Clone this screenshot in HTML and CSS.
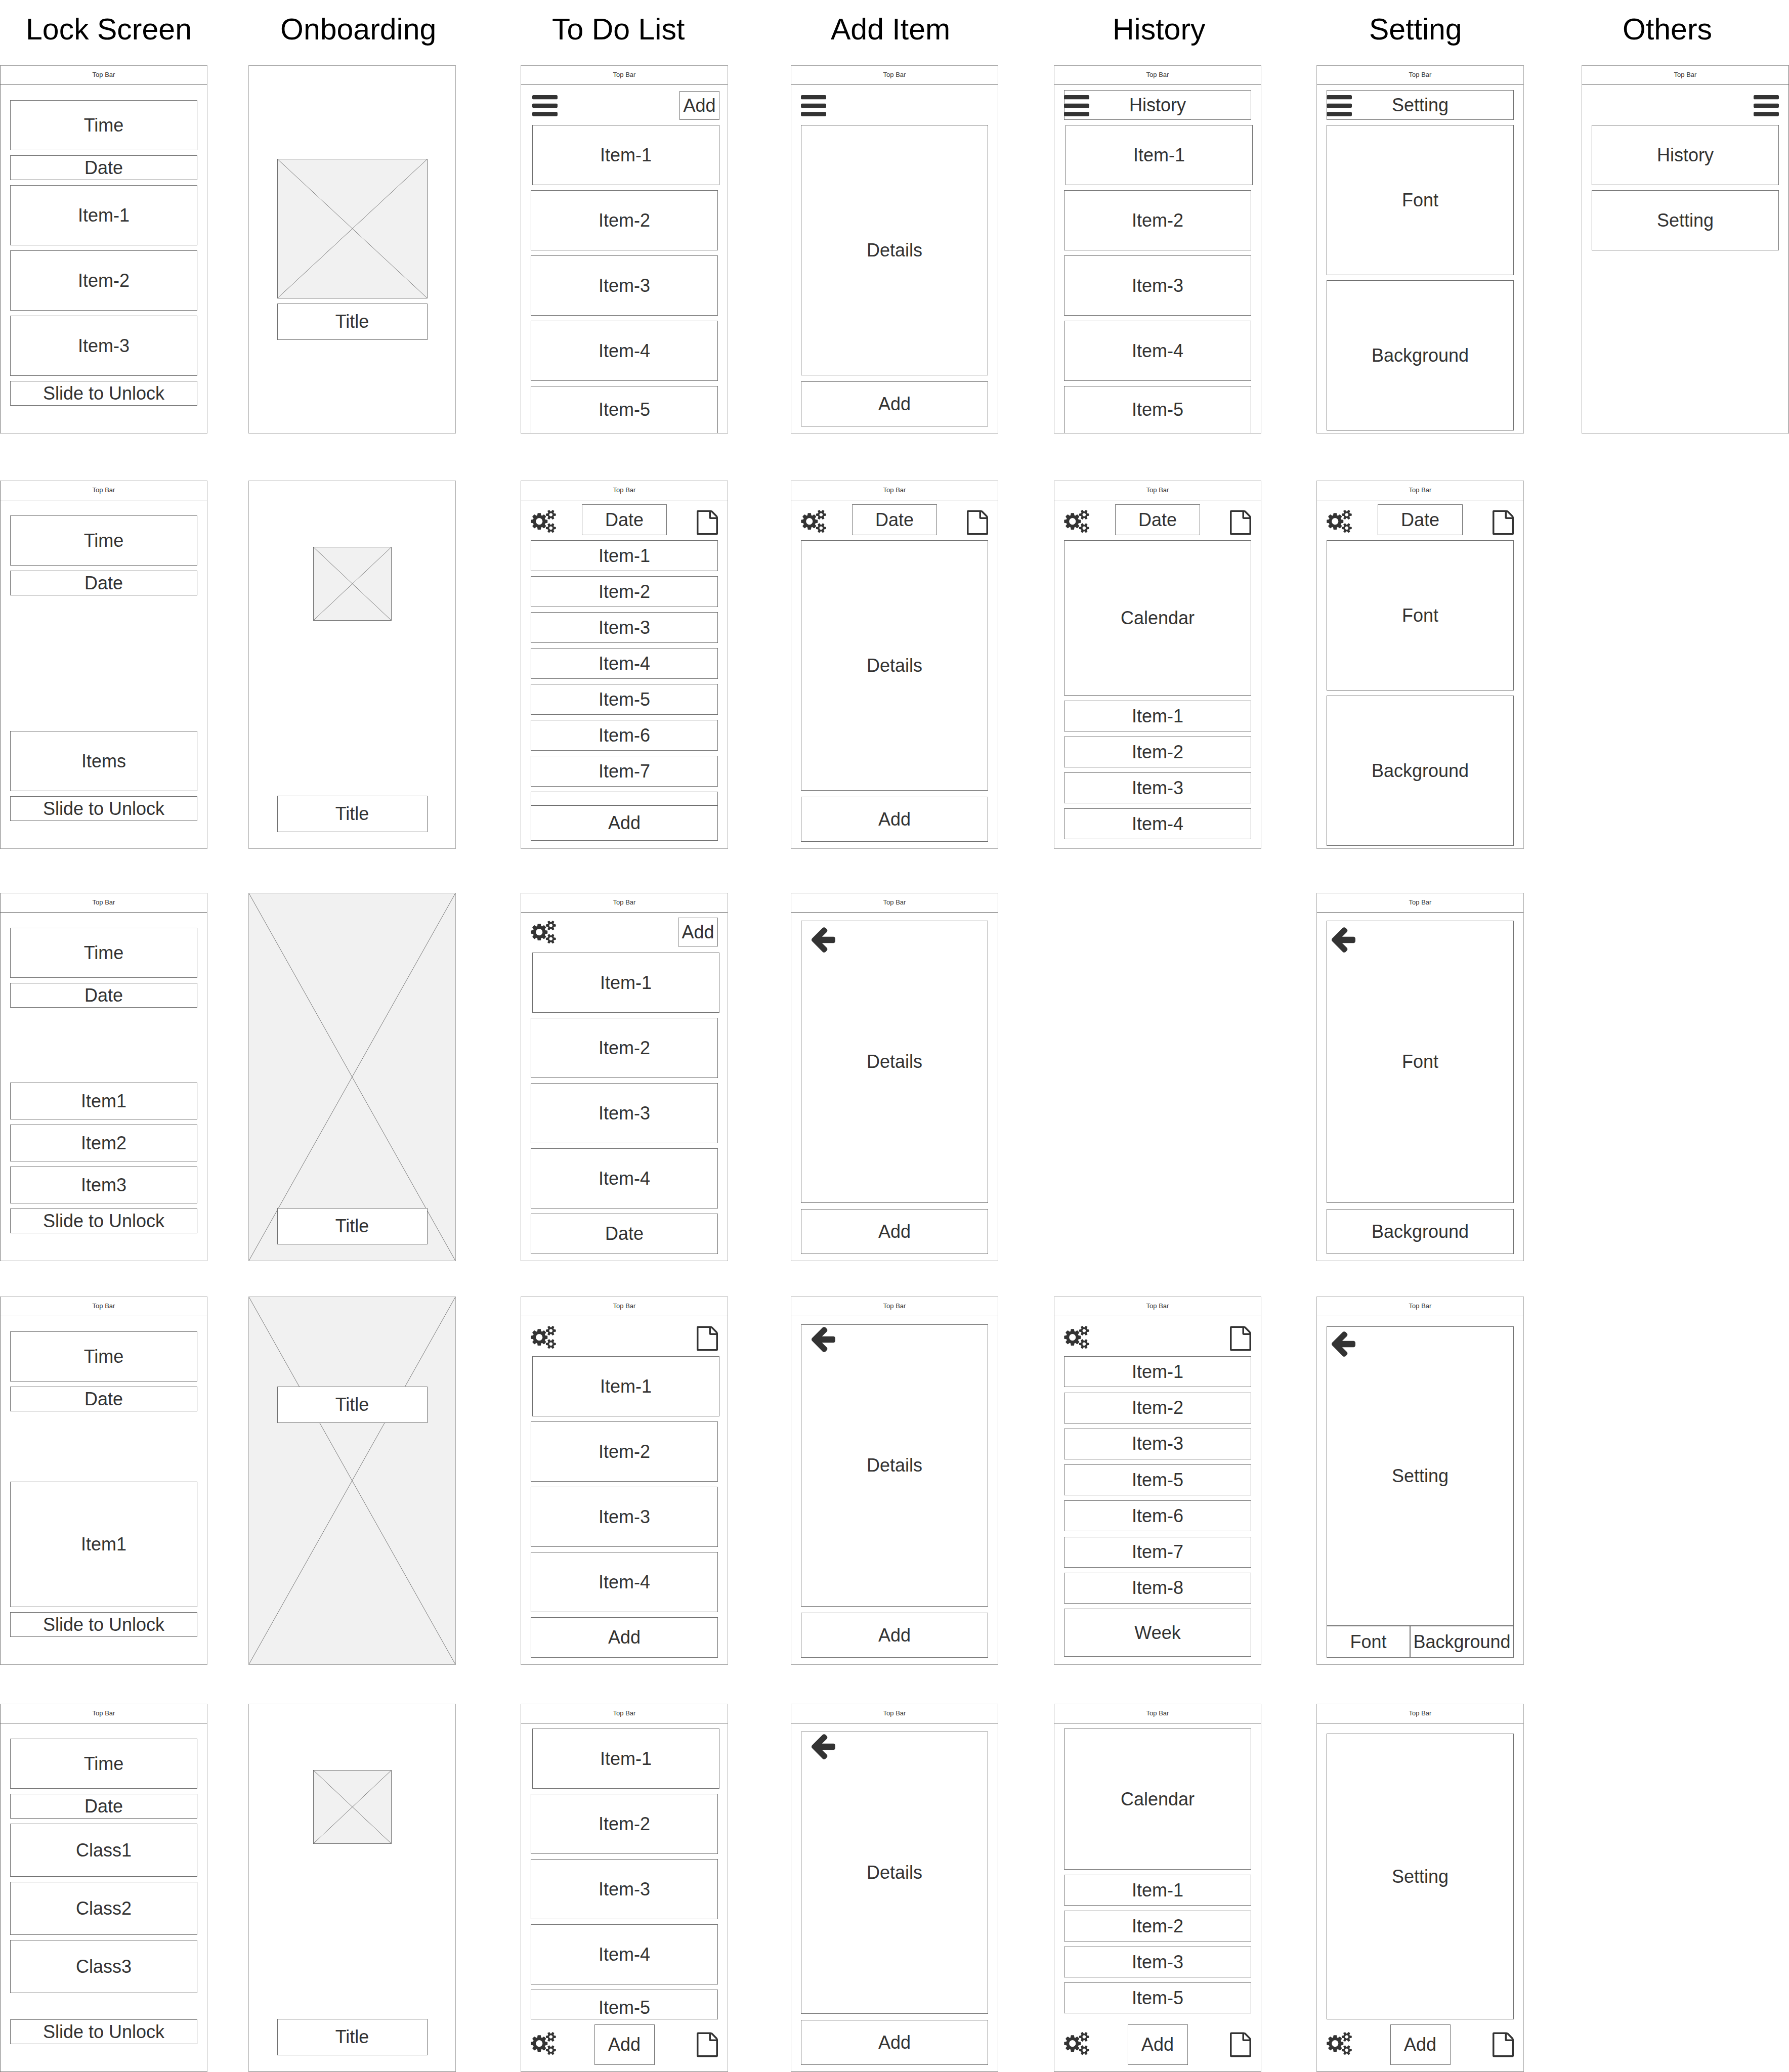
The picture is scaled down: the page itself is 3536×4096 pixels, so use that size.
FILE: index.html
```html
<!DOCTYPE html>
<html lang="en">
<head>
<meta charset="utf-8">
<meta name="viewport" content="width=device-width, initial-scale=1">
<title>To-do app wireframes</title>
<link rel="stylesheet" href="styles.css">
</head>
<body>
<svg class="sprite" aria-hidden="true">
  <symbol id="bars" viewBox="128 225 1536 1536"><path d="M1664 1344v128q0 26-19 45t-45 19h-1408q-26 0-45-19t-19-45v-128q0-26 19-45t45-19h1408q26 0 45 19t19 45zm0-512v128q0 26-19 45t-45 19h-1408q-26 0-45-19t-19-45v-128q0-26 19-45t45-19h1408q26 0 45 19t19 45zm0-512v128q0 26-19 45t-45 19h-1408q-26 0-45-19t-19-45v-128q0-26 19-45t45-19h1408q26 0 45 19t19 45z"/></symbol>
  <symbol id="page" viewBox="128 0 1536 1792"><path d="M1596 380q28 28 48 76t20 88v1152q0 40-28 68t-68 28h-1344q-40 0-68-28t-28-68v-1600q0-40 28-68t68-28h896q40 0 88 20t76 48zm-444-244v376h376q-10-29-22-41l-313-313q-12-12-41-22zm384 1528v-1024h-416q-40 0-68-28t-28-68v-416h-768v1536h1280z"/></symbol>
  <symbol id="back" viewBox="192 180 1472 1560"><path d="M1664 896v128q0 53-32.5 90.5t-84.5 37.5h-704l293 294q38 36 38 90t-38 90l-75 76q-37 37-90 37-52 0-91-37l-651-652q-37-37-37-90 0-52 37-91l651-650q38-38 91-38 52 0 90 38l75 74q38 38 38 91t-38 91l-293 293h704q52 0 84.5 37.5t32.5 90.5z"/></symbol>
  <symbol id="gears" viewBox="0 16 1920 1943"><path d="M896 896q0-106-75-181t-181-75-181 75-75 181 75 181 181 75 181-75 75-181zm768 512q0-52-38-90t-90-38-90 38-38 90q0 53 37.5 90.5t90.5 37.5 90.5-37.5 37.5-90.5zm0-1024q0-52-38-90t-90-38-90 38-38 90q0 53 37.5 90.5t90.5 37.5 90.5-37.5 37.5-90.5zm-384 421v185q0 10-7 19.5t-16 10.5l-155 24q-11 35-32 76 34 48 90 115 7 11 7 20 0 12-7 19-23 30-82.5 89.5t-78.5 59.5q-11 0-21-7l-115-90q-37 19-77 31-11 108-23 155-7 24-30 24h-186q-11 0-20-7.5t-10-17.5l-23-153q-34-10-75-31l-118 89q-7 7-20 7-11 0-21-8-144-133-144-160 0-9 7-19 10-14 41-53t47-61q-23-44-35-82l-152-24q-10-1-17-9.5t-7-19.5v-185q0-10 7-19.5t16-10.5l155-24q11-35 32-76-34-48-90-115-7-11-7-20 0-12 7-20 22-30 82-89t79-59q11 0 21 7l115 90q34-18 77-32 11-108 23-154 7-24 30-24h186q11 0 20 7.5t10 17.5l23 153q34 10 75 31l118-89q8-7 20-7 11 0 21 8 144 133 144 160 0 8-7 19-12 16-42 54t-45 60q23 48 34 82l152 23q10 2 17 10.5t7 19.5zm640 533v140q0 16-149 31-12 27-30 52 51 113 51 138 0 4-4 7-122 71-124 71-8 0-46-47t-52-68q-20 2-30 2t-30-2q-14 21-52 68t-46 47q-2 0-124-71-4-3-4-7 0-25 51-138-18-25-30-52-149-15-149-31v-140q0-16 149-31 13-29 30-52-51-113-51-138 0-4 4-7 4-2 35-20t59-34 30-16q8 0 46 46.5t52 67.5q20-2 30-2t30 2q51-71 92-112l6-2q4 0 124 70 4 3 4 7 0 25-51 138 17 23 30 52 149 15 149 31zm0-1024v140q0 16-149 31-12 27-30 52 51 113 51 138 0 4-4 7-122 71-124 71-8 0-46-47t-52-68q-20 2-30 2t-30-2q-14 21-52 68t-46 47q-2 0-124-71-4-3-4-7 0-25 51-138-18-25-30-52-149-15-149-31v-140q0-16 149-31 13-29 30-52-51-113-51-138 0-4 4-7 4-2 35-20t59-34 30-16q8 0 46 46.5t52 67.5q20-2 30-2t30 2q51-71 92-112l6-2q4 0 124 70 4 3 4 7 0 25-51 138 17 23 30 52 149 15 149 31z"/></symbol>
</svg>

<header class="headings">
  <h2>Lock Screen</h2>
  <h2>Onboarding</h2>
  <h2>To Do List</h2>
  <h2>Add Item</h2>
  <h2>History</h2>
  <h2>Setting</h2>
  <h2>Others</h2>
</header>

<main class="board">
  <!-- Option 1 -->
  <section class="row">
    <article class="screen col-lock">
      <div class="topbar">Top Bar</div>
      <div class="body body-lock">
        <div class="box h-99">Time</div>
        <div class="box h-49">Date</div>
        <div class="box h-119">Item-1</div>
        <div class="box h-119">Item-2</div>
        <div class="box h-119">Item-3</div>
        <button class="box h-49">Slide to Unlock</button>
      </div>
    </article>
    <article class="screen col-onboarding">
      <div class="splash splash-middle">
        <svg class="placeholder placeholder-large" viewBox="0 0 100 100" preserveAspectRatio="none"><path d="M0 0L100 100M100 0L0 100"/></svg>
        <div class="box title">Title</div>
      </div>
    </article>
    <article class="screen col-todo">
      <div class="topbar">Top Bar</div>
      <div class="body pad-12 flush">
        <div class="tools lead">
          <button class="icon" aria-label="Menu"><svg class="i-bars"><use href="#bars"/></svg></button>
          <button class="box small-add">Add</button>
        </div>
        <div class="box h-119 lead">Item-1</div>
        <div class="box h-119">Item-2</div>
        <div class="box h-119">Item-3</div>
        <div class="box h-119">Item-4</div>
        <div class="box cut">Item-5</div>
      </div>
    </article>
    <article class="screen col-add">
      <div class="topbar">Top Bar</div>
      <div class="body pad-12">
        <div class="tools h-57">
          <button class="icon" aria-label="Menu"><svg class="i-bars"><use href="#bars"/></svg></button>
        </div>
        <div class="form">
          <div class="box grow">Details</div>
          <button class="box h-89">Add</button>
        </div>
      </div>
    </article>
    <article class="screen col-history">
      <div class="topbar">Top Bar</div>
      <div class="body pad-10 flush">
        <div class="titlebar">
          <div class="box h-59">History</div>
          <button class="icon" aria-label="Menu"><svg class="i-bars"><use href="#bars"/></svg></button>
        </div>
        <div class="box h-119 lead">Item-1</div>
        <div class="box h-119">Item-2</div>
        <div class="box h-119">Item-3</div>
        <div class="box h-119">Item-4</div>
        <div class="box cut">Item-5</div>
      </div>
    </article>
    <article class="screen col-setting">
      <div class="topbar">Top Bar</div>
      <div class="body pad-10 flush">
        <div class="titlebar">
          <div class="box h-59">Setting</div>
          <button class="icon" aria-label="Menu"><svg class="i-bars"><use href="#bars"/></svg></button>
        </div>
        <div class="box h-297">Font</div>
        <div class="box h-297">Background</div>
      </div>
    </article>
    <article class="screen col-others">
      <div class="topbar">Top Bar</div>
      <div class="body pad-12">
        <div class="tools tools-right h-57">
          <button class="icon" aria-label="Menu"><svg class="i-bars"><use href="#bars"/></svg></button>
        </div>
        <a class="box h-119" href="#history">History</a>
        <a class="box h-119" href="#setting">Setting</a>
      </div>
    </article>
  </section>

  <!-- Option 2 -->
  <section class="row row-2">
    <article class="screen col-lock">
      <div class="topbar">Top Bar</div>
      <div class="body body-lock">
        <div class="box h-99">Time</div>
        <div class="box h-49">Date</div>
        <div class="box h-119 push">Items</div>
        <button class="box h-49">Slide to Unlock</button>
      </div>
    </article>
    <article class="screen col-onboarding">
      <div class="splash splash-apart">
        <svg class="placeholder placeholder-small" viewBox="0 0 100 100" preserveAspectRatio="none"><path d="M0 0L100 100M100 0L0 100"/></svg>
        <div class="box title">Title</div>
      </div>
    </article>
    <article class="screen col-todo">
      <div class="topbar">Top Bar</div>
      <div class="body pad-8 end-15">
        <div class="tools tools-three">
          <button class="icon" aria-label="Settings"><svg class="i-gears"><use href="#gears"/></svg></button>
          <div class="box date">Date</div>
          <button class="icon" aria-label="History"><svg class="i-page"><use href="#page"/></svg></button>
        </div>
        <div class="box h-61">Item-1</div>
        <div class="box h-61">Item-2</div>
        <div class="box h-61">Item-3</div>
        <div class="box h-61">Item-4</div>
        <div class="box h-61">Item-5</div>
        <div class="box h-61">Item-6</div>
        <div class="box h-61">Item-7</div>
        <div class="joined">
          <div class="box grow"></div>
          <button class="box h-70">Add</button>
        </div>
      </div>
    </article>
    <article class="screen col-add">
      <div class="topbar">Top Bar</div>
      <div class="body pad-8">
        <div class="tools tools-three">
          <button class="icon" aria-label="Settings"><svg class="i-gears"><use href="#gears"/></svg></button>
          <div class="box date">Date</div>
          <button class="icon" aria-label="History"><svg class="i-page"><use href="#page"/></svg></button>
        </div>
        <div class="form">
          <div class="box grow">Details</div>
          <button class="box h-89">Add</button>
        </div>
      </div>
    </article>
    <article class="screen col-history">
      <div class="topbar">Top Bar</div>
      <div class="body pad-8">
        <div class="tools tools-three">
          <button class="icon" aria-label="Settings"><svg class="i-gears"><use href="#gears"/></svg></button>
          <div class="box date">Date</div>
          <button class="icon" aria-label="History"><svg class="i-page"><use href="#page"/></svg></button>
        </div>
        <div class="box h-307">Calendar</div>
        <div class="box h-61">Item-1</div>
        <div class="box h-61">Item-2</div>
        <div class="box h-61">Item-3</div>
        <div class="box h-61">Item-4</div>
      </div>
    </article>
    <article class="screen col-setting">
      <div class="topbar">Top Bar</div>
      <div class="body pad-8 flush">
        <div class="tools tools-three">
          <button class="icon" aria-label="Settings"><svg class="i-gears"><use href="#gears"/></svg></button>
          <div class="box date">Date</div>
          <button class="icon" aria-label="History"><svg class="i-page"><use href="#page"/></svg></button>
        </div>
        <div class="box h-297">Font</div>
        <div class="box h-297">Background</div>
      </div>
    </article>
  </section>

  <!-- Option 3 -->
  <section class="row row-3">
    <article class="screen col-lock">
      <div class="topbar">Top Bar</div>
      <div class="body body-lock">
        <div class="box h-99">Time</div>
        <div class="box h-49">Date</div>
        <div class="box h-73 push">Item1</div>
        <div class="box h-73">Item2</div>
        <div class="box h-73">Item3</div>
        <button class="box h-49">Slide to Unlock</button>
      </div>
    </article>
    <article class="screen screen-filled col-onboarding">
      <svg class="backdrop" viewBox="0 0 100 100" preserveAspectRatio="none"><path d="M0 0L100 100M100 0L0 100"/></svg>
      <div class="splash splash-bottom">
        <div class="box title">Title</div>
      </div>
    </article>
    <article class="screen col-todo">
      <div class="topbar">Top Bar</div>
      <div class="body pad-10">
        <div class="tools h-59">
          <button class="icon" aria-label="Settings"><svg class="i-gears"><use href="#gears"/></svg></button>
          <button class="box small-add">Add</button>
        </div>
        <div class="box h-119 lead">Item-1</div>
        <div class="box h-119">Item-2</div>
        <div class="box h-119">Item-3</div>
        <div class="box h-119">Item-4</div>
        <div class="box h-80">Date</div>
      </div>
    </article>
    <article class="screen col-add">
      <div class="topbar">Top Bar</div>
      <div class="body pad-16">
        <div class="form">
          <div class="box grow with-back">Details
            <button class="icon back" aria-label="Back"><svg class="i-back"><use href="#back"/></svg></button>
          </div>
          <button class="box h-89">Add</button>
        </div>
      </div>
    </article>
    <article class="screen col-setting">
      <div class="topbar">Top Bar</div>
      <div class="body pad-16">
        <div class="form">
          <div class="box grow with-back">Font
            <button class="icon back back-near" aria-label="Back"><svg class="i-back"><use href="#back"/></svg></button>
          </div>
          <button class="box h-89">Background</button>
        </div>
      </div>
    </article>
  </section>

  <!-- Option 4 -->
  <section class="row row-4">
    <article class="screen col-lock">
      <div class="topbar">Top Bar</div>
      <div class="body body-lock">
        <div class="box h-99">Time</div>
        <div class="box h-49">Date</div>
        <div class="box h-248 push">Item1</div>
        <button class="box h-49">Slide to Unlock</button>
      </div>
    </article>
    <article class="screen screen-filled col-onboarding">
      <svg class="backdrop" viewBox="0 0 100 100" preserveAspectRatio="none"><path d="M0 0L100 100M100 0L0 100"/></svg>
      <div class="splash splash-top">
        <div class="box title">Title</div>
      </div>
    </article>
    <article class="screen col-todo">
      <div class="topbar">Top Bar</div>
      <div class="body pad-8">
        <div class="tools h-61">
          <button class="icon" aria-label="Settings"><svg class="i-gears"><use href="#gears"/></svg></button>
          <button class="icon" aria-label="History"><svg class="i-page"><use href="#page"/></svg></button>
        </div>
        <div class="box h-119 lead">Item-1</div>
        <div class="box h-119">Item-2</div>
        <div class="box h-119">Item-3</div>
        <div class="box h-119">Item-4</div>
        <button class="box h-80">Add</button>
      </div>
    </article>
    <article class="screen col-add">
      <div class="topbar">Top Bar</div>
      <div class="body pad-16">
        <div class="form">
          <div class="box grow with-back">Details
            <button class="icon back back-high" aria-label="Back"><svg class="i-back"><use href="#back"/></svg></button>
          </div>
          <button class="box h-89">Add</button>
        </div>
      </div>
    </article>
    <article class="screen col-history">
      <div class="topbar">Top Bar</div>
      <div class="body pad-8 end-15 spread">
        <div class="tools h-61">
          <button class="icon" aria-label="Settings"><svg class="i-gears"><use href="#gears"/></svg></button>
          <button class="icon" aria-label="History"><svg class="i-page"><use href="#page"/></svg></button>
        </div>
        <div class="box h-61">Item-1</div>
        <div class="box h-61">Item-2</div>
        <div class="box h-61">Item-3</div>
        <div class="box h-61">Item-5</div>
        <div class="box h-61">Item-6</div>
        <div class="box h-61">Item-7</div>
        <div class="box h-61">Item-8</div>
        <div class="box h-95">Week</div>
      </div>
    </article>
    <article class="screen col-setting">
      <div class="topbar">Top Bar</div>
      <div class="body pad-20">
        <div class="joined">
          <div class="box grow with-back">Setting
            <button class="icon back back-corner" aria-label="Back"><svg class="i-back"><use href="#back"/></svg></button>
          </div>
          <div class="tabs">
            <button class="box h-63">Font</button>
            <button class="box h-63">Background</button>
          </div>
        </div>
      </div>
    </article>
  </section>

  <!-- Option 5 -->
  <section class="row row-5">
    <article class="screen col-lock">
      <div class="topbar">Top Bar</div>
      <div class="body body-lock">
        <div class="box h-99">Time</div>
        <div class="box h-49">Date</div>
        <div class="box h-105">Class1</div>
        <div class="box h-105">Class2</div>
        <div class="box h-105">Class3</div>
        <button class="box h-49 push">Slide to Unlock</button>
      </div>
    </article>
    <article class="screen col-onboarding">
      <div class="splash splash-apart">
        <svg class="placeholder placeholder-small" viewBox="0 0 100 100" preserveAspectRatio="none"><path d="M0 0L100 100M100 0L0 100"/></svg>
        <div class="box title">Title</div>
      </div>
    </article>
    <article class="screen col-todo">
      <div class="topbar">Top Bar</div>
      <div class="body pad-10">
        <div class="box h-119 lead">Item-1</div>
        <div class="box h-119">Item-2</div>
        <div class="box h-119">Item-3</div>
        <div class="box h-119">Item-4</div>
        <div class="box h-59 overlapped">Item-5</div>
        <div class="tools tools-three tools-bottom">
          <button class="icon" aria-label="Settings"><svg class="i-gears"><use href="#gears"/></svg></button>
          <button class="box wide-add">Add</button>
          <button class="icon" aria-label="History"><svg class="i-page"><use href="#page"/></svg></button>
        </div>
      </div>
    </article>
    <article class="screen col-add">
      <div class="topbar">Top Bar</div>
      <div class="body pad-16">
        <div class="form">
          <div class="box grow with-back">Details
            <button class="icon back back-high" aria-label="Back"><svg class="i-back"><use href="#back"/></svg></button>
          </div>
          <button class="box h-89">Add</button>
        </div>
      </div>
    </article>
    <article class="screen col-history">
      <div class="topbar">Top Bar</div>
      <div class="body pad-10">
        <div class="box h-279">Calendar</div>
        <div class="box h-61">Item-1</div>
        <div class="box h-61">Item-2</div>
        <div class="box h-61">Item-3</div>
        <div class="box h-61">Item-5</div>
        <div class="tools tools-three tools-bottom">
          <button class="icon" aria-label="Settings"><svg class="i-gears"><use href="#gears"/></svg></button>
          <button class="box wide-add">Add</button>
          <button class="icon" aria-label="History"><svg class="i-page"><use href="#page"/></svg></button>
        </div>
      </div>
    </article>
    <article class="screen col-setting">
      <div class="topbar">Top Bar</div>
      <div class="body pad-20">
        <div class="box grow">Setting</div>
        <div class="tools tools-three tools-bottom">
          <button class="icon" aria-label="Settings"><svg class="i-gears"><use href="#gears"/></svg></button>
          <button class="box wide-add">Add</button>
          <button class="icon" aria-label="History"><svg class="i-page"><use href="#page"/></svg></button>
        </div>
      </div>
    </article>
  </section>
</main>
</body>
</html>
```

FILE: styles.css
```css
:root {
  --ink: #333;
  --line: #707070;
  --frame: #adadad;
  --fill: #f1f1f1;
}

* {
  box-sizing: border-box;
}

body {
  margin: 0;
  background: #fff;
  color: var(--ink);
  font-family: "Liberation Sans", Arial, Helvetica, sans-serif;
  font-size: 36px;
  line-height: 40px;
}

.sprite {
  display: none;
}

button,
a {
  color: inherit;
  font: inherit;
  text-decoration: none;
}

button {
  margin: 0;
  padding: 0;
  border: 0;
  background: none;
  cursor: pointer;
}

/* Column headings */
.headings {
  display: grid;
  grid-template-columns: 51fr 503fr 537fr 551fr 557fr 507fr 501fr 329fr;
  padding-bottom: 12px;
}

.headings h2 {
  margin: 0;
  color: #000;
  font-size: 59px;
  font-weight: 400;
  line-height: 117px;
  white-space: nowrap;
}

.headings h2:first-child {
  grid-column: 2;
}

/* Board */
.row {
  display: grid;
  grid-template-columns:
    410fr 81fr 410fr 128fr 410fr 124fr 410fr 110fr 410fr 109fr 410fr 114fr 410fr;
}

.row-2 { margin-top: 93px; }
.row-3 { margin-top: 87px; }
.row-4 { margin-top: 70px; }
.row-5 { margin-top: 77px; }

.col-lock { grid-column: 1; }
.col-onboarding { grid-column: 3; }
.col-todo { grid-column: 5; }
.col-add { grid-column: 7; }
.col-history { grid-column: 9; }
.col-setting { grid-column: 11; }
.col-others { grid-column: 13; }

.screen {
  position: relative;
  display: flex;
  flex-direction: column;
  min-width: 0;
  height: 728px;
  border: 1px solid var(--frame);
  overflow: hidden;
}

.col-lock { border-left-color: var(--line); }
.col-others { border-right-color: var(--line); }
.row-5 .screen { border-bottom-color: var(--line); }

.topbar {
  flex: none;
  height: 38px;
  border-bottom: 1px solid var(--line);
  font-size: 13px;
  line-height: 36px;
  text-align: center;
}

.body {
  display: flex;
  flex: 1;
  flex-direction: column;
  gap: 10px;
  min-height: 0;
  padding: 0 19px 13px;
}

.body-lock { padding-top: 30px; padding-bottom: 54px; }
.pad-8 { padding-top: 8px; }
.pad-10 { padding-top: 10px; }
.pad-12 { padding-top: 12px; }
.pad-16 { padding-top: 16px; }
.pad-20 { padding-top: 20px; }
.end-15 { padding-bottom: 15px; }
.flush { padding-bottom: 0; }
.spread { justify-content: space-between; }

/* Boxes */
.box {
  display: flex;
  flex: none;
  align-items: center;
  justify-content: center;
  border: 1px solid var(--line);
  background: #fff;
  white-space: nowrap;
}

.h-49 { height: 49px; }
.h-57 { height: 57px; }
.h-59 { height: 59px; }
.h-61 { height: 61px; }
.h-63 { height: 63px; }
.h-70 { height: 70px; }
.h-73 { height: 73px; }
.h-80 { height: 80px; }
.h-89 { height: 89px; }
.h-95 { height: 95px; }
.h-99 { height: 99px; }
.h-105 { height: 105px; }
.h-119 { height: 119px; }
.h-248 { height: 248px; }
.h-279 { height: 279px; }
.h-297 { height: 297px; }
.h-307 { height: 307px; }

.grow { flex: 1; }
.push { margin-top: auto; }
.lead { margin-right: -3px; margin-left: 3px; }
.cut { flex: 1; border-bottom: 0; }
.overlapped { padding-top: 12px; }

.form,
.joined {
  display: flex;
  flex: 1;
  flex-direction: column;
}

.form { gap: 12px; }

.tabs {
  display: grid;
  grid-template-columns: 165fr 205fr;
}

/* Tool rows */
.tools {
  display: flex;
  flex: none;
  align-items: flex-end;
  justify-content: space-between;
}

.tools-right { justify-content: flex-end; }

.tools-three {
  display: grid;
  grid-template-columns: 1fr auto 1fr;
}

.tools-three .icon:first-child { justify-self: start; }
.tools-three .icon:last-child { justify-self: end; }

.tools-bottom {
  align-items: center;
  margin-top: auto;
}

.tools.h-59 { align-items: flex-start; }
.tools.h-59 .icon { margin-top: 6px; }

.date { width: 168px; height: 61px; }
.small-add { width: 79px; height: 57px; }
.wide-add { width: 119px; height: 80px; }

.titlebar { position: relative; }

.titlebar .icon {
  position: absolute;
  bottom: 0;
  left: 0;
}

.with-back { position: relative; }

.back {
  position: absolute;
  top: 12px;
  left: 20px;
}

.back-near { left: 9px; }
.back-high { top: 4px; }
.back-corner { top: 9px; left: 9px; }

/* Icons */
.icon {
  display: block;
}

.icon svg {
  display: block;
  fill: var(--ink);
}

.i-bars { width: 50px; height: 50px; }
.i-gears { width: 50px; height: 50px; }
.i-page { width: 42px; height: 50px; }
.i-back { width: 47px; height: 50px; }

/* Onboarding */
.splash {
  position: relative;
  display: flex;
  flex: 1;
  flex-direction: column;
  align-items: center;
}

.splash-middle { gap: 10px; padding-top: 184px; }
.splash-apart { justify-content: space-between; padding: 130px 0 32px; }
.splash-bottom { justify-content: flex-end; padding-bottom: 32px; }
.splash-top { padding-top: 177px; }

.title { width: 297px; height: 72px; }

.placeholder {
  flex: none;
  border: 1px solid var(--line);
  background: var(--fill);
}

.placeholder-large { width: 297px; height: 276px; }
.placeholder-small { width: 155px; height: 146px; }

.screen-filled { background: var(--fill); }

.backdrop {
  position: absolute;
  inset: 0;
  width: 100%;
  height: 100%;
}

.placeholder path,
.backdrop path {
  fill: none;
  stroke: #777;
  stroke-width: 1px;
  vector-effect: non-scaling-stroke;
}
```
